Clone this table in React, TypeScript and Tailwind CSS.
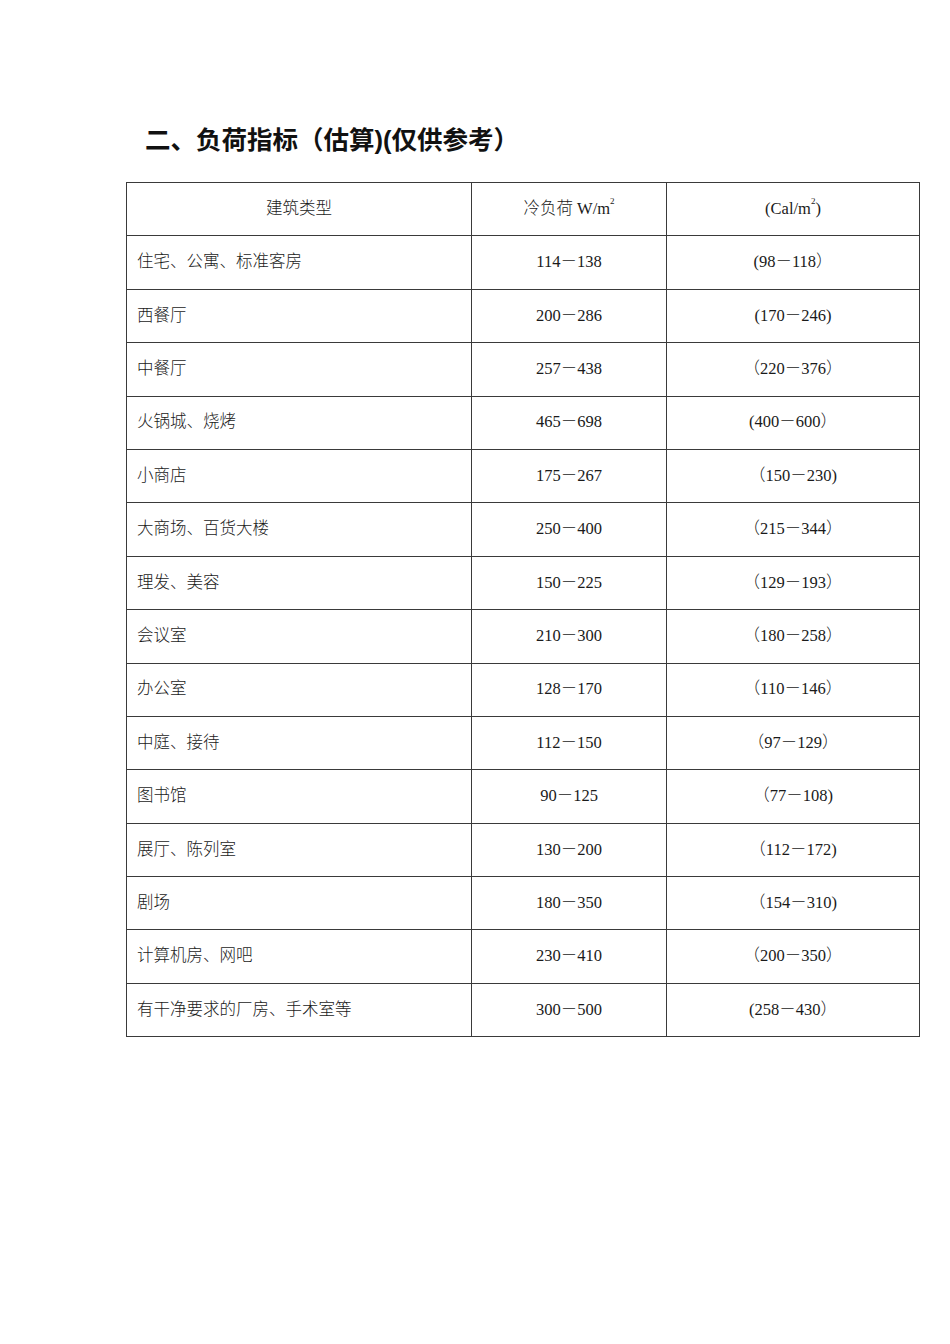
const rows: [string, string, string][] = [
  ["住宅、公寓、标准客房", "114－138", "(98－118）"],
  ["西餐厅", "200－286", "(170－246)"],
  ["中餐厅", "257－438", "（220－376）"],
  ["火锅城、烧烤", "465－698", "(400－600）"],
  ["小商店", "175－267", "（150－230)"],
  ["大商场、百货大楼", "250－400", "（215－344）"],
  ["理发、美容", "150－225", "（129－193）"],
  ["会议室", "210－300", "（180－258）"],
  ["办公室", "128－170", "（110－146）"],
  ["中庭、接待", "112－150", "（97－129）"],
  ["图书馆", "90－125", "（77－108)"],
  ["展厅、陈列室", "130－200", "（112－172)"],
  ["剧场", "180－350", "（154－310)"],
  ["计算机房、网吧", "230－410", "（200－350）"],
  ["有干净要求的厂房、手术室等", "300－500", "(258－430）"],
];

const cellFont = {
  fontFamily: '"Liberation Serif", "Noto Sans CJK SC", serif',
};

const App = () => {
  return (
    <div className="min-h-[1344px] w-[950px] bg-white text-[#1a1a1a]">
      <div className="pt-[124px] pl-[145px]">
        <h2
          className="text-[25.5px] font-bold leading-[32px] text-[#111]"
          style={{ fontFamily: '"Liberation Sans", "Noto Sans CJK SC", sans-serif' }}
        >
          二、负荷指标（估算)(仅供参考）
        </h2>
      </div>

      <div className="pt-[26px] pl-[126px]">
        <table
          className="w-[793px] table-fixed border-collapse text-[16.5px] font-light"
          style={cellFont}
        >
          <colgroup>
            <col className="w-[345px]" />
            <col className="w-[195px]" />
            <col className="w-[253px]" />
          </colgroup>
          <thead>
            <tr className="h-[53.4px]">
              <th className="border border-[#3a3a3a] font-light text-center">建筑类型</th>
              <th className="border border-[#3a3a3a] font-light text-center">
                冷负荷 W/m<sup className="text-[9px] align-[5px] leading-none">2</sup>
              </th>
              <th className="border border-[#3a3a3a] font-light text-center">
                (Cal/m<sup className="text-[9px] align-[5px] leading-none">2</sup>)
              </th>
            </tr>
          </thead>
          <tbody>
            {rows.map(([name, load, cal]) => (
              <tr key={name} className="h-[53.4px]">
                <td className="border border-[#3a3a3a] pl-[10px] text-left">{name}</td>
                <td className="border border-[#3a3a3a] text-center">{load}</td>
                <td className="border border-[#3a3a3a] text-center">{cal}</td>
              </tr>
            ))}
          </tbody>
        </table>
      </div>
    </div>
  );
};

export default App;
